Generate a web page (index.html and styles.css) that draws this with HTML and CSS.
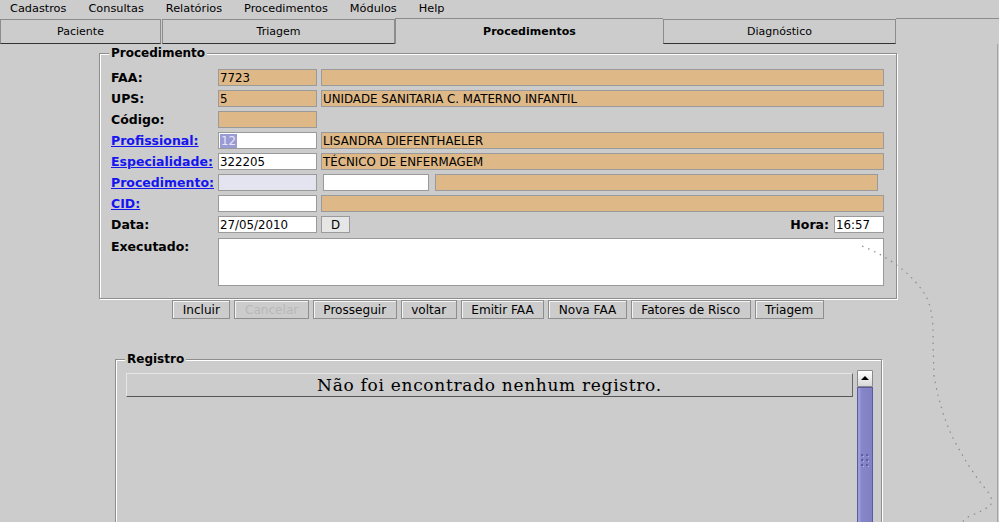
FILE: index.html
```html
<!DOCTYPE html>
<html lang="pt">
<head>
<meta charset="utf-8">
<title>Procedimentos</title>
<link rel="stylesheet" href="styles.css">
</head>
<body>
<nav class="menubar">
  <span class="menu">Cadastros</span>
  <span class="menu">Consultas</span>
  <span class="menu">Relatórios</span>
  <span class="menu">Procedimentos</span>
  <span class="menu">Módulos</span>
  <span class="menu">Help</span>
</nav>
<div class="tabs">
  <div class="tab t-paciente">Paciente</div>
  <div class="tab t-triagem">Triagem</div>
  <div class="tab t-proc">Procedimentos</div>
  <div class="tab t-diag">Diagnóstico</div>
  <div class="tab-rest"></div>
</div>
<main class="pane">
  <section class="group proc">
    <h2 class="legend">Procedimento</h2>
    <div class="row first">
      <span class="lbl">FAA:</span>
      <span class="fld tan code">7723</span>
      <span class="fld tan wide"></span>
    </div>
    <div class="row">
      <span class="lbl">UPS:</span>
      <span class="fld tan code">5</span>
      <span class="fld tan wide">UNIDADE SANITARIA C. MATERNO INFANTIL</span>
    </div>
    <div class="row">
      <span class="lbl">Código:</span>
      <span class="fld tan code"></span>
    </div>
    <div class="row">
      <a class="lbl link">Profissional:</a>
      <span class="fld white code"><span class="sel">12</span></span>
      <span class="fld tan wide">LISANDRA DIEFENTHAELER</span>
    </div>
    <div class="row">
      <a class="lbl link">Especialidade:</a>
      <span class="fld white code">322205</span>
      <span class="fld tan wide">TÉCNICO DE ENFERMAGEM</span>
    </div>
    <div class="row">
      <a class="lbl link">Procedimento:</a>
      <span class="fld lav code"></span>
      <span class="fld white mid"></span>
      <span class="fld tan rest"></span>
    </div>
    <div class="row">
      <a class="lbl link">CID:</a>
      <span class="fld white code"></span>
      <span class="fld tan wide"></span>
    </div>
    <div class="row">
      <span class="lbl">Data:</span>
      <span class="fld white code">27/05/2010</span>
      <span class="dbtn">D</span>
      <span class="lbl hora">Hora:</span>
      <span class="fld white time">16:57</span>
    </div>
    <div class="row exec">
      <span class="lbl">Executado:</span>
      <span class="fld white area"></span>
    </div>
  </section>

  <div class="buttons">
    <button class="btn">Incluir</button>
    <button class="btn off">Cancelar</button>
    <button class="btn">Prosseguir</button>
    <button class="btn">voltar</button>
    <button class="btn">Emitir FAA</button>
    <button class="btn">Nova FAA</button>
    <button class="btn">Fatores de Risco</button>
    <button class="btn">Triagem</button>
  </div>

  <section class="group registro">
    <h2 class="legend">Registro</h2>
    <div class="scrollpane">
      <div class="table">
        <div class="thead">Não foi encontrado nenhum registro.</div>
      </div>
      <div class="vscroll">
        <div class="arrow-up">
          <svg width="14" height="15" viewBox="0 0 14 15"><path d="M3 9 L7 5 L11 9 Z" fill="#000"/></svg>
        </div>
        <div class="thumb">
          <svg class="grip" width="9" height="14" viewBox="0 0 9 14">
            <g fill="#5c5ca8">
              <rect x="0" y="0" width="2" height="2"/><rect x="5" y="0" width="2" height="2"/>
              <rect x="0" y="5" width="2" height="2"/><rect x="5" y="5" width="2" height="2"/>
              <rect x="0" y="10" width="2" height="2"/><rect x="5" y="10" width="2" height="2"/>
            </g>
            <g fill="#b4b4e8">
              <rect x="2" y="2" width="1" height="1"/><rect x="7" y="2" width="1" height="1"/>
              <rect x="2" y="7" width="1" height="1"/><rect x="7" y="7" width="1" height="1"/>
              <rect x="2" y="12" width="1" height="1"/><rect x="7" y="12" width="1" height="1"/>
            </g>
          </svg>
        </div>
      </div>
    </div>
  </section>
</main>
<svg class="scratch" width="999" height="522" viewBox="0 0 999 522">
  <path d="M862 246 Q 906 264 926 296 Q 934 312 933 340 L 934 376 Q 940 410 952 436 Q 968 468 988 492 Q 994 500 990 506 Q 980 512 968 517 L 962 522" fill="none" stroke="#8a8a8a" stroke-width="1.2" stroke-dasharray="1.5 5"/>
</svg>
</body>
</html>
```
FILE: styles.css
```css
* { box-sizing: border-box; }
html, body { margin: 0; padding: 0; }
body {
  width: 999px;
  height: 522px;
  overflow: hidden;
  position: relative;
  background: #cccccc;
  color: #000;
  font-family: "DejaVu Sans", "Noto Sans", sans-serif;
}

/* menu bar */
.menubar {
  display: flex;
  gap: 22px;
  height: 18px;
  padding-left: 10px;
  font-size: 11.3px;
  line-height: 18px;
}

/* tabs */
.tabs {
  display: flex;
  height: 26px;
  padding-top: 1px;
  font-size: 11px;
}
.tab {
  height: 25px;
  border: 1px solid #8c8c8c;
  border-bottom-color: #333;
  text-align: center;
  line-height: 23px;
}
.t-paciente { width: 161px; margin-right: 1px; }
.t-triagem { width: 233px; }
.t-proc {
  width: 268px;
  height: 26px;
  margin-top: -1px;
  border-bottom: none;
  border-right: none;
  font-weight: bold;
  line-height: 25px;
}
.t-diag { width: 233px; }
.tab-rest {
  flex: 1;
  margin-top: -1px;
  border-top: 1px solid #8c8c8c;
}

/* main pane */
.pane {
  width: 998px;
  height: 478px;
  border-right: 1px solid #a4a4a4;
  padding-top: 9px;
  overflow: hidden;
}

.group {
  border: 1px solid #8e8e8e;
  box-shadow: inset 1px 1px 0 #ffffff, 1px 1px 0 #ffffff;
}
.legend {
  display: table;
  margin: -8px 0 0 -1px;
  padding: 0 2px;
  background: #cccccc;
  font-size: 12px;
  line-height: 14px;
  font-weight: bold;
}

.proc {
  width: 798px;
  margin-left: 99px;
  padding: 0 12px 12px 10px;
}

.row {
  display: flex;
  align-items: center;
  height: 17px;
  margin-top: 4px;
}
.row.first { margin-top: 9px; }
.row.exec {
  margin-top: 5px;
  height: 48px;
  align-items: flex-start;
}

.lbl {
  width: 108px;
  padding-left: 1px;
  font-weight: bold;
  font-size: 12.5px;
  line-height: 15px;
  white-space: nowrap;
}
.link {
  color: #1515f0;
  text-decoration: underline;
}
.exec .lbl { line-height: 16px; padding-top: 1px; }

.fld {
  display: block;
  height: 17px;
  border: 1px solid #9a9a9a;
  padding: 1px 0 0 1px;
  font-size: 11.8px;
  line-height: 15px;
  white-space: nowrap;
  overflow: hidden;
}
.tan { background: #deb887; }
.white { background: #ffffff; }
.lav { background: #e4e4f0; }

.code { width: 99px; }
.wide { flex: 1; margin-left: 4px; }
.mid { width: 106px; margin-left: 6px; }
.rest { flex: 1; margin-left: 6px; margin-right: 6px; }
.time { width: 50px; }
.area { flex: 1; height: 48px; }

.sel {
  background: #9a9ad4;
  color: #e6e6f6;
  padding: 0 1px;
}

.dbtn {
  width: 29px;
  height: 17px;
  margin-left: 4px;
  border: 1px solid #9a9a9a;
  background: #e6e6e6;
  font-size: 11.8px;
  line-height: 16px;
  text-align: center;
}
.lbl.hora {
  width: auto;
  margin-left: auto;
  margin-right: 5px;
}

/* buttons */
.buttons {
  display: flex;
  justify-content: center;
  gap: 4px;
  margin-top: 1px;
  padding-right: 1px;
}
.btn {
  height: 19px;
  padding: 1px 9.5px 0;
  border: 1px solid #8e8e8e;
  box-shadow: inset 1px 1px 0 #f4f4f4;
  background: #cccccc;
  font-family: "DejaVu Sans", sans-serif;
  font-size: 12.1px;
  line-height: 16px;
  color: #000;
}
.btn.off { color: #b8b8b8; }

/* registro */
.registro {
  width: 767px;
  height: 200px;
  margin: 40px 0 0 115px;
  padding: 0 8px 0 10px;
}
.scrollpane {
  display: flex;
  margin-top: 4px;
  height: 180px;
}
.table {
  flex: 1;
  margin-right: 4px;
}
.thead {
  height: 24px;
  margin-top: 3px;
  border-top: 1px solid #e6e6e6;
  border-left: 1px solid #e6e6e6;
  border-bottom: 1px solid #555;
  border-right: 1px solid #666;
  font-family: "DejaVu Serif", serif;
  font-size: 17px;
  letter-spacing: 0.7px;
  line-height: 22px;
  text-align: center;
}
.vscroll {
  width: 16px;
  display: flex;
  flex-direction: column;
}
.arrow-up {
  height: 17px;
  border: 1px solid #8a8a8a;
  border-radius: 1px;
  background: linear-gradient(#ffffff, #d8d8d8);
}
.arrow-up svg { display: block; }
.thumb {
  flex: 1;
  border: 1px solid #5a5a9c;
  background: linear-gradient(90deg, #9c9cdc 0, #9c9cdc 2px, #8686c8 3px, #8080c4 100%);
  display: flex;
  justify-content: center;
  padding-top: 66px;
}
.grip { display: block; }

.scratch {
  position: absolute;
  left: 0;
  top: 0;
  pointer-events: none;
}
```
